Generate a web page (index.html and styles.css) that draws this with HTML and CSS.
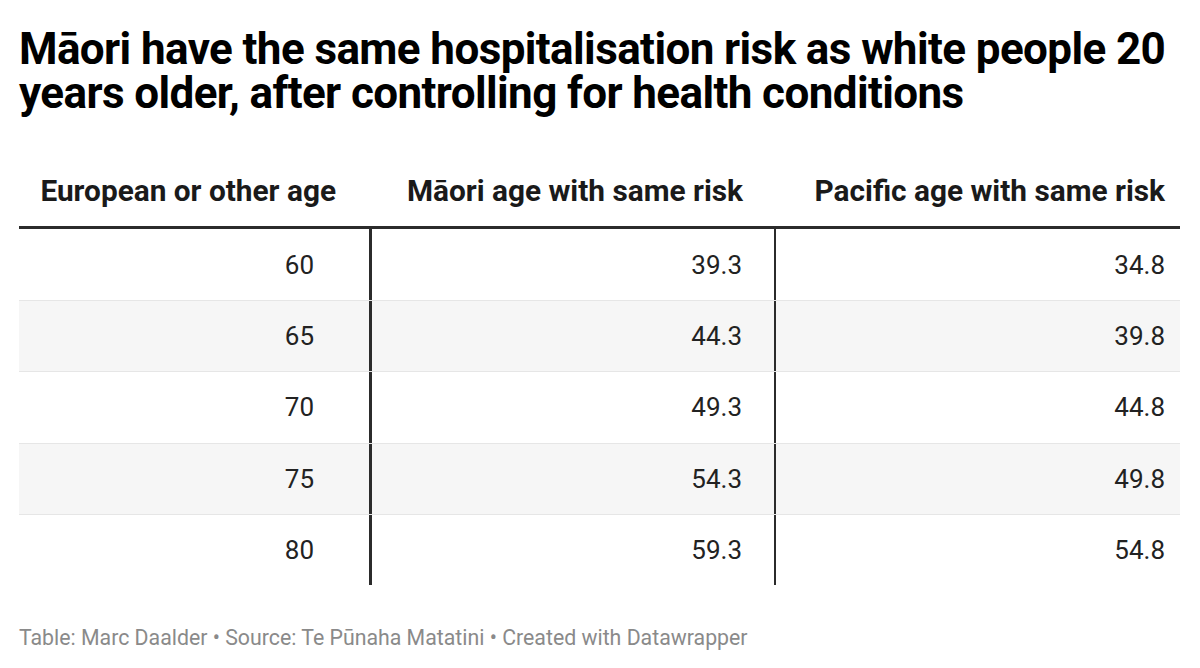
FILE: index.html
```html
<!DOCTYPE html>
<html lang="en">
<head>
<meta charset="utf-8">
<link rel="stylesheet" href="styles.css">
</head>
<body>
<div class="chart">
  <h1 class="title">Māori have the same hospitalisation risk as white people 20 years older, after controlling for health conditions</h1>
  <div class="table">
    <div class="row head">
      <div class="cell c1">European or other age</div>
      <div class="cell c2">Māori age with same risk</div>
      <div class="cell c3">Pacific age with same risk</div>
    </div>
    <div class="row">
      <div class="cell c1">60</div><div class="cell c2">39.3</div><div class="cell c3">34.8</div>
    </div>
    <div class="row alt">
      <div class="cell c1">65</div><div class="cell c2">44.3</div><div class="cell c3">39.8</div>
    </div>
    <div class="row">
      <div class="cell c1">70</div><div class="cell c2">49.3</div><div class="cell c3">44.8</div>
    </div>
    <div class="row alt">
      <div class="cell c1">75</div><div class="cell c2">54.3</div><div class="cell c3">49.8</div>
    </div>
    <div class="row">
      <div class="cell c1">80</div><div class="cell c2">59.3</div><div class="cell c3">54.8</div>
    </div>
  </div>
  <div class="footer">Table: Marc Daalder • Source: Te Pūnaha Matatini • Created with Datawrapper</div>
</div>
</body>
</html>
```

FILE: styles.css
```css
html, body {
  margin: 0;
  padding: 0;
  background: #fff;
}
body {
  font-family: Roboto, "Liberation Sans", sans-serif;
  color: #181818;
}
.chart {
  padding: 27px 20px 0 19px;
  width: 1161px;
}
.title {
  margin: 0;
  font-size: 44px;
  line-height: 44px;
  font-weight: 700;
  letter-spacing: -0.6px;
  color: #000;
}
.table {
  margin-top: 61px;
}
.row {
  display: grid;
  grid-template-columns: 350px 405px 406px;
  height: 71.2px;
  border-top: 1px solid #e6e6e6;
  box-sizing: border-box;
}
.row.alt {
  background: #f6f6f6;
}
.row.head {
  height: auto;
  border-top: none;
  border-bottom: 3px solid #2b2b2b;
  padding-bottom: 20px;
}
.row.head + .row {
  border-top: none;
}
.cell {
  display: flex;
  align-items: center;
  justify-content: flex-end;
  font-size: 26px;
  color: #222;
}
.row .c2 {
  border-left: 3px solid #2b2b2b;
  padding-right: 32px;
}
.row .c3 {
  border-left: 2px solid #2b2b2b;
  padding-right: 15px;
}
.row .c1 {
  padding-right: 55px;
}
.row.head .cell {
  font-weight: 700;
  font-size: 29.8px;
  border-left: none;
  line-height: 30px;
  color: #1a1a1a;
}
.row.head .c1 { padding-right: 33px; }
.row.head .c2 { padding-right: 31px; }
.row.head .c3 { padding-right: 15px; }
.footer {
  margin-top: 41px;
  font-size: 21.3px;
  line-height: 24px;
  color: #8a8a8a;
}
```
